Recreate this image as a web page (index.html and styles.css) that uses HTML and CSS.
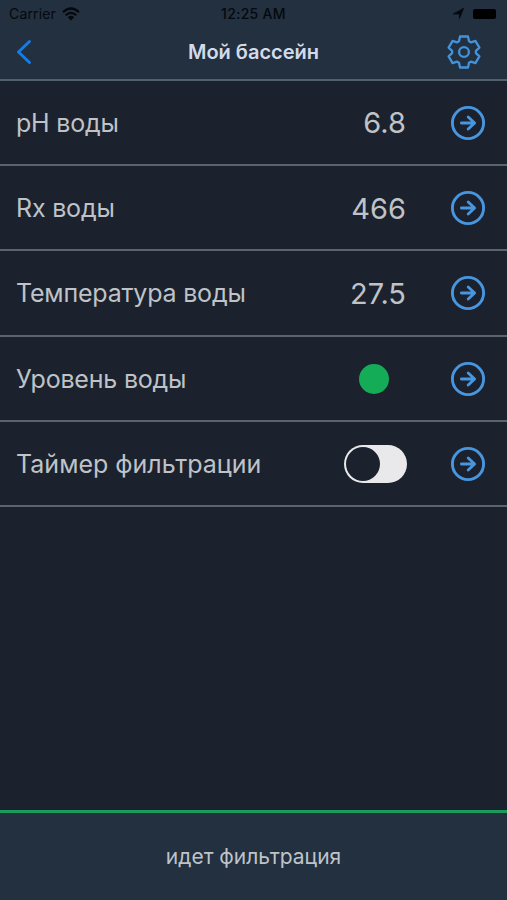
FILE: index.html
```html
<!DOCTYPE html>
<html lang="ru">
<head>
    <meta charset="utf-8">
    <meta name="viewport" content="width=device-width, initial-scale=1">
    <title>Мой бассейн</title>
    <link rel="stylesheet" href="styles.css">
</head>
<body>
<svg class="sprite">
    <symbol id="arrow" viewBox="0 0 36 36">
        <circle cx="18" cy="18" r="15.6"/>
        <path d="M11.4 18h13M18.2 12l6.400 6-6.400 6"/>
    </symbol>
</svg>
<header class="header">
    <div class="statusbar">
        <div class="carrier">
            <span class="carriername">Carrier</span>
            <svg class="wifi" viewBox="0 0 18 14">
                <path d="M1 5.2Q9-2.2 17 5.2M3.7 8.2Q9 3.4 14.3 8.2"/>
                <path class="solid" d="M5.8 10.2Q9 7.4 12.2 10.2L9 13.6z"/>
            </svg>
        </div>
        <span class="clock">12:25 AM</span>
        <div class="indicators">
            <svg class="location" viewBox="0 0 12 12"><path d="M11.5.5L7 11.5V6.5H.6z"/></svg>
            <span class="battery"></span>
        </div>
    </div>
    <nav class="navbar">
        <svg class="back" viewBox="0 0 16 26"><path d="M13.5 2.5L2.5 13l11 10.5"/></svg>
        <h1 class="title">Мой бассейн</h1>
        <svg class="gear" viewBox="-17 -18 34 36">
            <path d="M-4-15.500H4L5-10.800L6.900-9.700L11.400-11.200L15.400-4.300L11.900-1.100V1.100L15.400 4.300L11.400 11.200L6.900 9.700L5 10.800L4 15.500H-4L-5 10.800L-6.900 9.700L-11.400 11.200L-15.400 4.300L-11.900 1.100V-1.100L-15.400-4.300L-11.400-11.200L-6.900-9.700L-5-10.800z"/>
            <circle r="4.900"/>
        </svg>
    </nav>
</header>
<main class="list">
    <div class="row">
        <span class="label">pH воды</span>
        <span class="value">6.8</span>
        <svg class="more"><use href="#arrow"/></svg>
    </div>
    <div class="row">
        <span class="label">Rx воды</span>
        <span class="value">466</span>
        <svg class="more"><use href="#arrow"/></svg>
    </div>
    <div class="row">
        <span class="label">Температура воды</span>
        <span class="value">27.5</span>
        <svg class="more"><use href="#arrow"/></svg>
    </div>
    <div class="row">
        <span class="label">Уровень воды</span>
        <span class="level"></span>
        <svg class="more"><use href="#arrow"/></svg>
    </div>
    <div class="row">
        <span class="label wide">Таймер фильтрации</span>
        <span class="switch"><span class="knob"></span></span>
        <svg class="more"><use href="#arrow"/></svg>
    </div>
</main>
<footer class="footer">идет фильтрация</footer>
</body>
</html>
```

FILE: styles.css
```css
* {
    box-sizing: border-box;
}

body {
    display: flex;
    flex-direction: column;
    height: 100vh;
    margin: 0;
    overflow: hidden;
    background-color: #1b222d;
    color: #bfc3c8;
    font-family: Inter, "Noto Sans", sans-serif;
}

svg {
    display: block;
    fill: none;
    stroke-linecap: round;
    stroke-linejoin: round;
}

.sprite {
    display: none;
}

/* header */
.header {
    height: 80.5px;
    flex: none;
    background-color: #223040;
    border-bottom: 2px solid #4e616c;
}

.statusbar {
    display: grid;
    grid-template-columns: 1fr auto 1fr;
    align-items: center;
    height: 27px;
    padding: 0 11px 0 9px;
    color: #05080c;
    font-size: 14px;
}

.carrier {
    display: flex;
    align-items: center;
    gap: 6px;
}

.carriername {
    letter-spacing: 0.15px;
}

.wifi {
    width: 18px;
    height: 14px;
    stroke: #05080c;
    stroke-width: 2.2;
    stroke-linecap: butt;
}

.wifi .solid {
    fill: #05080c;
    stroke: none;
}

.clock {
    padding-left: 2px;
    font-weight: 500;
    letter-spacing: 0.3px;
}

.indicators {
    display: flex;
    justify-content: flex-end;
    align-items: center;
    gap: 9px;
}

.location {
    width: 11px;
    height: 11px;
    fill: #05080c;
    stroke: #05080c;
    stroke-width: 0.8;
}

.battery {
    width: 23px;
    height: 10px;
    border-radius: 2px;
    background-color: #000;
}

.navbar {
    display: grid;
    grid-template-columns: 60px 1fr 60px;
    align-items: center;
    height: 50px;
}

.back {
    width: 16px;
    height: 26px;
    margin-left: 16px;
    stroke: #147ce5;
    stroke-width: 3;
}

.title {
    margin: 0;
    color: #d3dbe8;
    font-size: 20px;
    font-weight: 600;
    text-align: center;
}

.gear {
    width: 34px;
    height: 36px;
    stroke: #4392dc;
    stroke-width: 2.3;
}

/* readings */
.list {
    flex: 1;
}

.row {
    display: flex;
    align-items: center;
    height: 85.4px;
    padding: 1px 21px 0 16px;
    border-bottom: 2px solid #59646c;
}

.label {
    flex: 1;
    font-size: 25px;
    letter-spacing: -0.2px;
}

.label.wide {
    letter-spacing: 0;
}

.value {
    margin-right: 44px;
    font-size: 29px;
}

.more {
    width: 36px;
    height: 36px;
    stroke: #4796df;
    stroke-width: 2.9;
}

.level {
    width: 30px;
    height: 30px;
    margin-right: 61px;
    border-radius: 50%;
    background-color: #14ac57;
}

.switch {
    width: 63px;
    height: 38px;
    margin-right: 43px;
    padding: 2px;
    border-radius: 19px;
    background-color: #e9e9eb;
}

.knob {
    display: block;
    width: 34px;
    height: 34px;
    border-radius: 50%;
    background-color: #1b222d;
}

/* current state */
.footer {
    display: flex;
    justify-content: center;
    align-items: center;
    height: 90px;
    flex: none;
    border-top: 3px solid #1c9c5c;
    background-color: #223040;
    font-size: 21px;
}
```
